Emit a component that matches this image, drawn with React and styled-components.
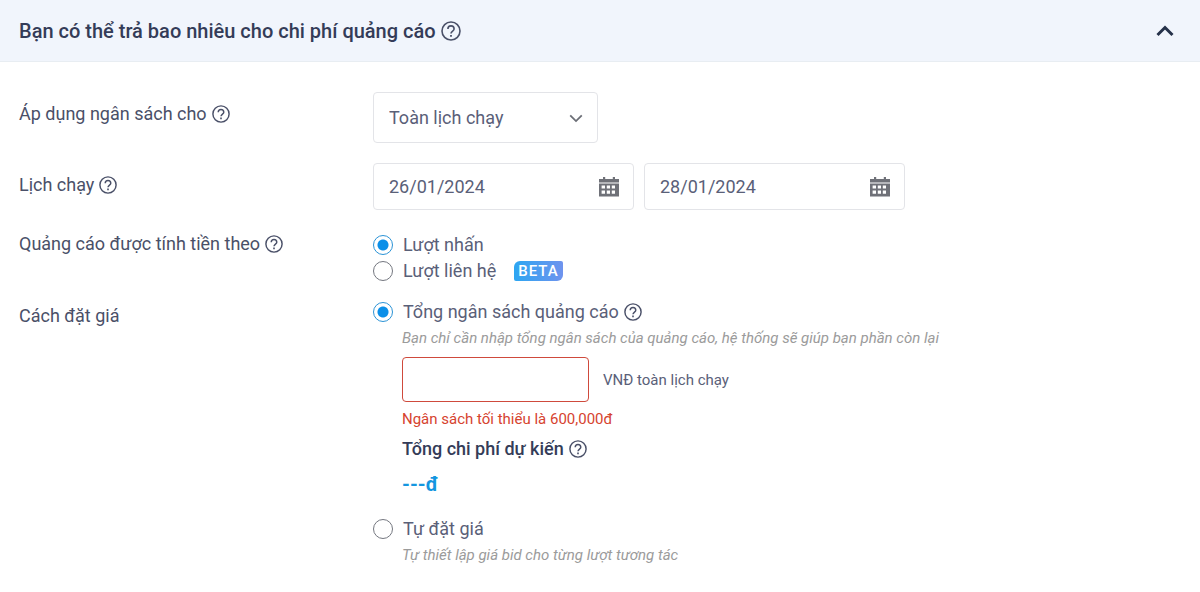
import React, { useState } from 'react';
import styled, { createGlobalStyle } from 'styled-components';

const Help = ({ size = 18, label }) => (
    <HelpButton type="button" aria-label={label}>
        <svg width={size} height={size} viewBox="0 0 20 20" fill="none" stroke="currentColor"
            strokeWidth="1.6" aria-hidden="true">
            <circle cx="10" cy="10" r="9" />
            <path d="M6.9 8A3.1 3.1 0 0 1 13.1 8C13.1 10 10 10.2 10 12.6" />
            <path d="M10 14V15.8" strokeWidth="1.8" />
        </svg>
    </HelpButton>
);

const Chevron = ({ up, size, weight }) => (
    <svg width={size} height={size} viewBox="0 0 18 18" fill="none" stroke="currentColor"
        strokeWidth={weight} aria-hidden="true">
        <path d={up ? "M1.5 13 L9 5.5 L16.5 13" : "M2.5 6 L9 12.5 L15.5 6"} />
    </svg>
);

const CalendarIcon = () => (
    <svg width="20" height="20" viewBox="0 0 20 20" fill="currentColor" aria-hidden="true">
        <path d="M0 2H4V0H6.2V2H13.8V0H16V2H20V5.4H0Z" />
        <path fillRule="evenodd" d="M0 6.6H20V19.5H0Z M2.6 8.4V11.6H6V8.4Z M7.8 8.4V11.6H11V8.4Z M12.8 8.4V11.6H16V8.4Z M2.6 13.4V16.8H6V13.4Z M7.8 13.4V16.8H11V13.4Z M12.8 13.4V16.8H16V13.4Z" />
    </svg>
);

const DateInput = ({ label, initial }) => {
    const [value, setValue] = useState(initial);
    return (
        <DateBox>
            <input type="text" aria-label={label} value={value} onChange={e => setValue(e.target.value)} />
            <CalendarButton type="button" aria-label="Chọn ngày">
                <CalendarIcon />
            </CalendarButton>
        </DateBox>
    );
};

const Radio = ({ id, name, value, selected, onSelect, children }) => (
    <RadioLine>
        <RadioInput id={id} type="radio" name={name} value={value}
            checked={selected === value} onChange={() => onSelect(value)} />
        <label htmlFor={id}>{children}</label>
    </RadioLine>
);

const App = () => {
    const [charge, setCharge] = useState("click");
    const [bid, setBid] = useState("total");
    const [open, setOpen] = useState(true);

    return (
        <Panel>
            <GlobalStyle />
            <Header>
                <Title>
                    Bạn có thể trả bao nhiêu cho chi phí quảng cáo
                    <Help size={20} label="Chi phí quảng cáo" />
                </Title>
                <Toggle type="button" aria-label="Thu gọn" aria-expanded={open} onClick={() => setOpen(!open)}>
                    <Chevron up={open} size={18} weight={3} />
                </Toggle>
            </Header>
            {open && <Body>
                <Row>
                    <Caption $field>
                        <label htmlFor="budgetScope">Áp dụng ngân sách cho</label>
                        <Help label="Áp dụng ngân sách" />
                    </Caption>
                    <SelectBox>
                        <select id="budgetScope">
                            <option>Toàn lịch chạy</option>
                            <option>Hàng ngày</option>
                        </select>
                        <Chevron size={16} weight={2} />
                    </SelectBox>
                </Row>
                <Row $gap={20}>
                    <Caption $field>
                        <span>Lịch chạy</span>
                        <Help label="Lịch chạy" />
                    </Caption>
                    <Dates>
                        <DateInput label="Ngày bắt đầu" initial="26/01/2024" />
                        <DateInput label="Ngày kết thúc" initial="28/01/2024" />
                    </Dates>
                </Row>
                <Row $gap={22}>
                    <Caption>
                        <span>Quảng cáo được tính tiền theo</span>
                        <Help label="Cách tính tiền" />
                    </Caption>
                    <div role="radiogroup" aria-label="Quảng cáo được tính tiền theo">
                        <Radio id="click" name="charge" value="click" selected={charge} onSelect={setCharge}>
                            Lượt nhấn
                        </Radio>
                        <Radio id="contact" name="charge" value="contact" selected={charge} onSelect={setCharge}>
                            Lượt liên hệ <Beta>BETA</Beta>
                        </Radio>
                    </div>
                </Row>
                <Row $gap={15}>
                    <Caption $low>
                        <span>Cách đặt giá</span>
                    </Caption>
                    <div role="radiogroup" aria-label="Cách đặt giá">
                        <OptionHead>
                            <Radio id="total" name="bid" value="total" selected={bid} onSelect={setBid}>
                                Tổng ngân sách quảng cáo
                            </Radio>
                            <Help label="Tổng ngân sách quảng cáo" />
                        </OptionHead>
                        <Details>
                            <Hint>Bạn chỉ cần nhập tổng ngân sách của quảng cáo, hệ thống sẽ giúp bạn phần còn lại</Hint>
                            <Amount>
                                <AmountInput id="amount" type="text" inputMode="numeric" aria-invalid="true" aria-describedby="amountError" />
                                <label htmlFor="amount">VNĐ toàn lịch chạy</label>
                            </Amount>
                            <ErrorText id="amountError">Ngân sách tối thiểu là 600,000đ</ErrorText>
                            <Estimate>
                                Tổng chi phí dự kiến
                                <Help label="Tổng chi phí dự kiến" />
                            </Estimate>
                            <Price>---đ</Price>
                        </Details>
                        <Radio id="manual" name="bid" value="manual" selected={bid} onSelect={setBid}>
                            Tự đặt giá
                        </Radio>
                        <Details>
                            <Hint>Tự thiết lập giá bid cho từng lượt tương tác</Hint>
                        </Details>
                    </div>
                </Row>
            </Body>}
        </Panel>
    );
};

const GlobalStyle = createGlobalStyle`
    * {
        box-sizing: border-box;
    }
    body {
        margin: 0;
        background: #fff;
        color: #4a5068;
        font-family: Roboto, "Liberation Sans", sans-serif;
        font-size: 18px;
        line-height: 26px;
    }
    button, input, select {
        font: inherit;
        color: inherit;
    }
    p, h2 {
        margin: 0;
    }
`

const Panel = styled.section`
    background: #fff;
`

const Header = styled.header`
    display: flex;
    align-items: center;
    justify-content: space-between;
    height: 62px;
    padding: 0 24px 0 19px;
    background: #f1f5fc;
    border-bottom: 1px solid #e8edf2;
`

const Title = styled.h2`
    display: flex;
    align-items: center;
    gap: 5px;
    font-size: 20px;
    font-weight: 500;
    color: #343c58;
`

const HelpButton = styled.button`
    display: inline-flex;
    padding: 0;
    border: 0;
    background: none;
    color: #4a5068;
    cursor: pointer;
`

const Toggle = styled.button`
    display: flex;
    padding: 2px;
    border: 0;
    background: none;
    color: #26324a;
    cursor: pointer;
`

const Body = styled.div`
    padding: 30px 19px 24px;
`

const Row = styled.div`
    display: grid;
    grid-template-columns: 354px 1fr;
    align-items: start;
    margin-top: ${props => props.$gap || 0}px;
`

const Caption = styled.div`
    display: flex;
    align-items: center;
    gap: 5px;
    line-height: 24px;
    padding-top: ${props => props.$field ? "10px" : props.$low ? "5px" : "0"};
`

const SelectBox = styled.div`
    display: grid;
    align-items: center;
    width: 225px;
    select, svg {
        grid-area: 1 / 1;
    }
    select {
        width: 100%;
        height: 51px;
        padding: 0 40px 0 15px;
        appearance: none;
        border: 1px solid #e3e4e8;
        border-radius: 4px;
        background: #fff;
        color: #5a6078;
    }
    svg {
        justify-self: end;
        margin-right: 14px;
        color: #6b6e76;
        pointer-events: none;
    }
`

const Dates = styled.div`
    display: flex;
    gap: 10px;
`

const DateBox = styled.div`
    display: flex;
    align-items: center;
    width: 261px;
    height: 47px;
    padding: 0 14px 0 15px;
    border: 1px solid #e3e4e8;
    border-radius: 4px;
    input {
        flex: 1;
        min-width: 0;
        padding: 0;
        border: 0;
        outline: 0;
        background: none;
        color: #5a6078;
    }
`

const CalendarButton = styled.button`
    display: flex;
    padding: 0;
    border: 0;
    background: none;
    color: #6f7178;
    cursor: pointer;
`

const RadioLine = styled.div`
    display: flex;
    align-items: center;
    gap: 10px;
    color: #5a6078;
    label {
        display: flex;
        align-items: center;
        gap: 18px;
    }
`

const RadioInput = styled.input`
    appearance: none;
    flex: none;
    width: 20px;
    height: 20px;
    margin: 0;
    border: 1px solid #74777f;
    border-radius: 50%;
    background: #fff;
    &:checked {
        border-color: #2b93d6;
        background: radial-gradient(circle, #0b8fe8 5px, #fff 6px);
    }
`

const Beta = styled.span`
    padding: 0 4px;
    border-radius: 6px 2px 6px 2px;
    background: linear-gradient(90deg, #2ca6f2, #6f93ee);
    color: #fff;
    font-size: 15px;
    font-weight: 500;
    line-height: 20px;
    letter-spacing: 1px;
`

const OptionHead = styled.div`
    display: flex;
    align-items: center;
    gap: 5px;
`

const Details = styled.div`
    padding-left: 29px;
`

const Hint = styled.p`
    color: #9b9b9b;
    font-size: 15px;
    font-style: italic;
`

const Amount = styled.div`
    display: flex;
    align-items: center;
    gap: 14px;
    margin: 6px 0;
    color: #5a6078;
    font-size: 15px;
`

const AmountInput = styled.input`
    width: 187px;
    height: 45px;
    padding: 0 12px;
    border: 1px solid #cf4a3c;
    border-radius: 4px;
    outline: 0;
`

const ErrorText = styled.p`
    color: #d6432f;
    font-size: 15px;
    line-height: 22px;
`

const Estimate = styled.div`
    display: flex;
    align-items: center;
    gap: 5px;
    margin-top: 6px;
    color: #343c58;
    font-weight: 500;
`

const Price = styled.p`
    margin: 9px 0 19px;
    color: #1496e0;
    font-size: 20px;
    font-weight: 700;
`

export default App;
